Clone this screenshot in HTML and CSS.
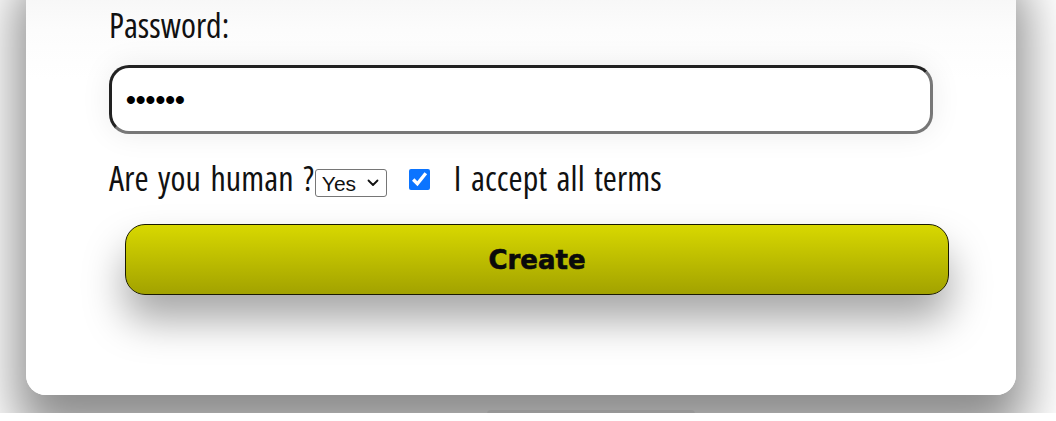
FILE: index.html
```html
<!DOCTYPE html>
<html lang="en">
<head>
<meta charset="utf-8">
<title>Create account</title>
<link rel="stylesheet" href="styles.css">
</head>
<body>
<div class="page">
  <form class="card">
    <label class="field-label" for="pw">Password:</label>
    <input class="text-input" id="pw" type="password" value="123456">
    <div class="options">
      <span class="opt-text">Are you human ?</span>
      <select class="human-select">
        <option>Yes</option>
        <option>No</option>
      </select>
      <input class="terms-check" type="checkbox" id="terms" checked>
      <label class="opt-text terms-label" for="terms">I accept all terms</label>
    </div>
    <button class="create-btn" type="button">Create</button>
  </form>
  <div class="below"></div>
</div>
</body>
</html>
```

FILE: styles.css
```css
html, body {
  margin: 0;
  padding: 0;
  background: #ffffff;
}

.page {
  height: 413px;
  overflow: hidden;
  position: relative;
  background: #ffffff;
}

.card {
  box-sizing: border-box;
  width: 990px;
  margin: -40px 0 0 26px;
  padding: 40px 83px 100px 83px;
  background: linear-gradient(#f2f2f2 0px, #fcfcfc 70px, #ffffff 120px);
  border-radius: 20px;
  box-shadow: 0 30px 50px 10px rgba(0, 0, 0, 0.45);
  display: flex;
  flex-direction: column;
  align-items: flex-start;
  position: relative;
  z-index: 1;
}

.field-label,
.opt-text {
  font-family: "Open Sans", "Roboto", sans-serif;
  font-stretch: 75%;
  font-weight: 500;
  font-size: 34px;
  line-height: 44px;
  color: #111;
}

.opt-text {
  word-spacing: 3px;
  letter-spacing: 0.1px;
}

.field-label {
  display: block;
  padding-top: 3px;
}

.text-input {
  box-sizing: border-box;
  width: 824px;
  height: 69px;
  margin-top: 18px;
  padding: 0 14px;
  border: 3px solid;
  border-color: #222 #777 #777 #222;
  border-radius: 20px;
  background: #fff;
  font-family: "Liberation Sans", sans-serif;
  font-size: 28px;
  font-weight: bold;
  color: #000;
  box-shadow: 0 0 30px rgba(0, 0, 0, 0.08);
  outline: none;
}

.options {
  display: flex;
  align-items: flex-start;
  height: 44px;
  margin-top: 22px;
}

.human-select {
  appearance: none;
  -webkit-appearance: none;
  box-sizing: border-box;
  margin: 13px 0 0 1px;
  height: 28px;
  width: 72px;
  padding: 0 0 0 6px;
  border: 1px solid #767676;
  border-radius: 3px;
  background: #fff url("data:image/svg+xml,%3Csvg xmlns='http://www.w3.org/2000/svg' width='12' height='8' viewBox='0 0 12 8'%3E%3Cpath d='M1.5 1.5 6 6l4.5-4.5' fill='none' stroke='%23111' stroke-width='1.8' stroke-linecap='round' stroke-linejoin='round'/%3E%3C/svg%3E") no-repeat right 7px center;
  font-family: "Liberation Sans", sans-serif;
  font-size: 21px;
  color: #111;
}

.terms-check {
  width: 21px;
  height: 21px;
  margin: 13px 0 0 22px;
  accent-color: #0b74ff;
}

.terms-label {
  margin-left: 24px;
}

.create-btn {
  box-sizing: border-box;
  width: 824px;
  height: 71px;
  margin-top: 24px;
  margin-left: 16px;
  border: 1px solid #1a1a00;
  border-radius: 20px;
  background: linear-gradient(#d8d800, #a2a200);
  box-shadow: 0 25px 40px rgba(0, 0, 0, 0.35);
  font-family: "DejaVu Sans", sans-serif;
  font-weight: bold;
  font-size: 26px;
  -webkit-text-stroke: 0.6px #0a0a0a;
  color: #0a0a0a;
  cursor: pointer;
}

.below {
  width: 208px;
  height: 8px;
  margin: 15px 0 0 487px;
  border-radius: 6px;
  background: rgba(0, 0, 0, 0.06);
}
```
